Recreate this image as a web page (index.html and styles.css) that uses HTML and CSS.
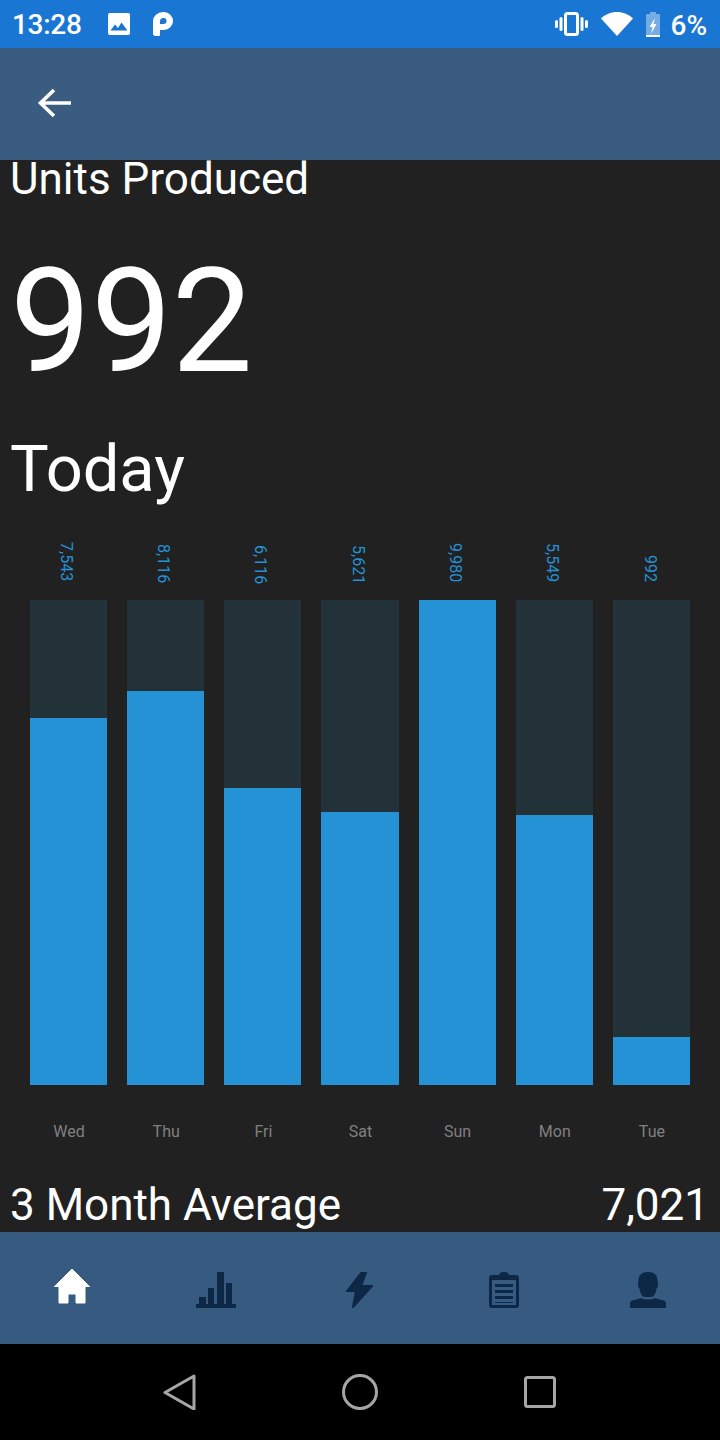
FILE: index.html
```html
<!DOCTYPE html>
<html lang="en">
<head>
<meta charset="utf-8">
<title>Units Produced</title>
<link rel="stylesheet" href="styles.css">
</head>
<body>
<div class="screen">
  <header class="status">
    <span class="time">13:28</span>
    <svg class="st-pic" viewBox="0 0 24 24"><path fill="#fff" d="M3 1h18a2 2 0 0 1 2 2v18a2 2 0 0 1-2 2H3a2 2 0 0 1-2-2V3a2 2 0 0 1 2-2z"/><path fill="#1976d2" d="M3.500 18.500l4.500-6 3 3.600 3.500-5.600 6 8z"/></svg>
    <svg class="st-p" viewBox="0 0 20 24"><path fill="#fff" fill-rule="evenodd" d="M1 23a1 1 0 0 0 1 1h4a1 1 0 0 0 1-1v-5h4a9 9 0 0 0 0-18H10A10 9 0 0 0 0 9v14zM10.500 6a3 3 0 0 1 0 6H7V9a3 3 0 0 1 3.500-3z"/></svg>
    <span class="spacer"></span>
    <svg class="st-vib" viewBox="0 0 33 24"><g fill="#fff"><rect x="0" y="8" width="3" height="8" rx="1.500"/><rect x="30" y="8" width="3" height="8" rx="1.500"/><rect x="4.500" y="5" width="3" height="14" rx="1.500"/><rect x="25.500" y="5" width="3" height="14" rx="1.500"/></g><rect x="10.500" y="1.500" width="12" height="21" rx="2" fill="none" stroke="#fff" stroke-width="3"/></svg>
    <svg class="st-wifi" viewBox="0 0 32 24"><path fill="#fff" d="M16 24 0 6.500C4 2.500 10 0 16 0s12 2.500 16 6.500z"/></svg>
    <svg class="st-batt" viewBox="0 0 14 26"><path fill="#fff" fill-opacity=".4" d="M4 2V0h6v2h3a1 1 0 0 1 1 1v22H0V3a1 1 0 0 1 1-1z"/><rect y="23" width="14" height="2" fill="#fff"/><path fill="#fff" d="M9 6 3.500 15h3l-1.500 7 5.500-10h-3z"/></svg>
    <span class="pct">6%</span>
  </header>

  <nav class="appbar">
    <svg class="back" viewBox="0 0 36 36"><path fill="none" stroke="#fff" stroke-width="3.600" d="M35 18H4M18 5 4.500 18 18 31"/></svg>
  </nav>

  <main class="content">
    <h1 class="title">Units Produced</h1>
    <div class="big">992</div>
    <div class="period">Today</div>
    <section class="chart">
      <div class="col"><span class="val">7,543</span><div class="track"><div class="fill" style="height:367px"></div></div><span class="day">Wed</span></div>
      <div class="col"><span class="val">8,116</span><div class="track"><div class="fill" style="height:394px"></div></div><span class="day">Thu</span></div>
      <div class="col"><span class="val">6,116</span><div class="track"><div class="fill" style="height:297px"></div></div><span class="day">Fri</span></div>
      <div class="col"><span class="val">5,621</span><div class="track"><div class="fill" style="height:273px"></div></div><span class="day">Sat</span></div>
      <div class="col"><span class="val">9,980</span><div class="track"><div class="fill" style="height:485px"></div></div><span class="day">Sun</span></div>
      <div class="col"><span class="val">5,549</span><div class="track"><div class="fill" style="height:270px"></div></div><span class="day">Mon</span></div>
      <div class="col"><span class="val">992</span><div class="track"><div class="fill" style="height:48px"></div></div><span class="day">Tue</span></div>
    </section>
    <div class="avg"><span>3 Month Average</span><span>7,021</span></div>
  </main>

  <nav class="tabs">
    <div class="tab tab-home"><svg class="ic" viewBox="0 0 36 36"><path fill="#fff" stroke="#fff" stroke-linejoin="round" d="M18 1 35.500 18.500H31V35H22V26H14V35H5V18.500H.5z"/></svg></div>
    <div class="tab"><svg class="ic" viewBox="0 0 40 36"><path fill="#0d2747" d="M3 25h7v8H3zM12 16h6v17h-6zM21 0h7v33h-7zM30 11h6v22h-6zM1 32h38a1 1 0 0 1 1 1v2a1 1 0 0 1-1 1H1a1 1 0 0 1-1-1v-2a1 1 0 0 1 1-1z"/></svg></div>
    <div class="tab"><svg class="ic" viewBox="1 0 28 36"><path fill="#0d2747" stroke="#0d2747" stroke-width="2" stroke-linejoin="round" d="M16 1 2 19h9L8 35l19-21H16l5-13z"/></svg></div>
    <div class="tab"><svg class="ic" viewBox="0 0 30 36"><path fill="#0d2747" fill-rule="evenodd" d="M10 3c0-2 2-3 5-3s5 1 5 3h7a3 3 0 0 1 3 3v27a3 3 0 0 1-3 3H3a3 3 0 0 1-3-3V6a3 3 0 0 1 3-3zM3 8v25h24V8z"/><path fill="#0d2747" d="M6 12h18v3H6zM6 18h18v3H6zM6 24h18v3H6zM6 30h18v1H6zM9 3h12v5H9z"/></svg></div>
    <div class="tab"><svg class="ic" viewBox="0 0 36 36"><path fill="#0d2747" d="M18 0c6 0 9.500 3 9.500 8 0 2 .5 3 .5 5 0 2-1 3-1.500 3.500C26 20 25 23 23 24.500c-2 .8-8 .8-10 0C11 23 10 20 9.500 16.500 9 16 8 15 8 13c0-2 .5-3 .5-5C8.500 3 12 0 18 0zM11.500 26c1 1 3.500 1.500 6.500 1.500s5.500-.5 6.500-1.500l9 2.500c1.500.5 2.500 1.500 2.500 3V36H0v-4.500c0-1.500 1-2.500 2.500-3z"/></svg></div>
  </nav>

  <footer class="sysnav">
    <svg class="sys sys-back" viewBox="0 0 36 36"><path fill="none" stroke="#a6a6a6" stroke-width="3" stroke-linejoin="round" d="M32 2v33L3 18.500z"/></svg>
    <svg class="sys" viewBox="0 0 36 36"><circle cx="18" cy="18" r="16.500" fill="none" stroke="#a6a6a6" stroke-width="3"/></svg>
    <svg class="sys" viewBox="0 0 36 36"><rect x="3.500" y="3.500" width="29" height="29" rx="2" fill="none" stroke="#a6a6a6" stroke-width="3"/></svg>
  </footer>
</div>
</body>
</html>
```
FILE: styles.css
```css
* { box-sizing: border-box; }
html, body { margin: 0; padding: 0; }
body { background: #000; font-family: Roboto, sans-serif; color: #fff; }
.screen { width: 720px; height: 1440px; display: flex; flex-direction: column; overflow: hidden; }

.status { height: 48px; flex: none; background: #1976d2; display: flex; align-items: center; padding: 2px 13px 0 12px; }
.time { font-size: 28px; font-weight: 500; line-height: 46px; letter-spacing: -.3px; }
.st-pic { width: 24px; height: 24px; margin: -2px 0 0 25px; }
.st-p { width: 20px; height: 24px; margin: -2px 0 0 22px; }
.spacer { flex: 1; }
.st-vib { width: 33px; height: 24px; margin-top: -2px; }
.st-wifi { width: 32px; height: 24px; margin: -2px 0 0 13px; }
.st-batt { width: 14px; height: 26px; margin-left: 13px; }
.pct { font-size: 28px; font-weight: 500; margin-left: 10px; }

.appbar { height: 112px; flex: none; background: #3a5c80; display: flex; align-items: center; padding: 0 0 2px 36px; }
.back { width: 36px; height: 36px; }

.content { flex: 1; min-height: 0; background: #212121; overflow: hidden; }
.title { margin: 0 0 0 10px; font-weight: 400; font-size: 44px; line-height: 38px; }
.big { margin: 40px 0 0 10px; font-size: 144px; line-height: 168px; }
.period { margin: 28px 0 0 10px; font-size: 65px; line-height: 70px; }

.chart { display: flex; gap: 20px; padding: 0 30px; margin-top: 26px; }
.col { flex: 1; min-width: 0; display: flex; flex-direction: column; align-items: stretch; }
.val { height: 70px; padding-bottom: 18px; writing-mode: vertical-rl; font-size: 16px; line-height: 18px; color: #2492d4; text-align: right; align-self: center; margin-left: -4px; }
.col:nth-child(1) .val { padding-bottom: 19px; margin-left: -6px; }
.col:nth-child(2) .val { padding-bottom: 17px; margin-left: -6px; }
.col:nth-child(3) .val { padding-bottom: 16px; margin-left: -6px; }
.col:nth-child(4) .val { padding-bottom: 16px; }
.col:nth-child(7) .val { margin-left: -2px; }
.track { height: 485px; background: #233139; display: flex; align-items: flex-end; }
.fill { width: 100%; background: #2492d4; }
.day { margin-top: 37px; padding-left: 1px; font-size: 16px; line-height: 20px; color: #808080; text-align: center; }

.avg { display: flex; justify-content: space-between; margin-top: 38px; padding: 0 11px 0 10px; font-size: 44px; line-height: 50px; }

.tabs { height: 112px; flex: none; background: #375a80; display: flex; }
.tab { width: 144px; display: flex; justify-content: center; padding-top: 40px; }
.tab-home { padding-top: 36px; }
.ic { height: 36px; width: 40px; }

.sysnav { height: 96px; flex: none; background: #000; display: flex; justify-content: center; gap: 144px; align-items: center; }
.sys { width: 36px; height: 36px; }
```
